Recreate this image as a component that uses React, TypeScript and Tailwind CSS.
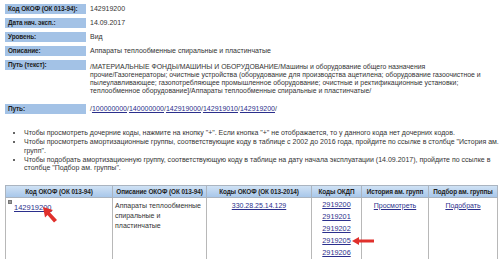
import React from "react";

const links = "text-[#2b2f8c] underline";
const labelCls =
  "w-[81px] h-[10px] shrink-0 bg-[#a3c2e6] pl-[3px] font-bold text-[6.4px] tracking-[-0.1px] leading-[10px] whitespace-nowrap text-[#1c1c1c]";

function InfoRow({ label, children }: { label: string; children: React.ReactNode }) {
  return (
    <div className="flex items-start">
      <div className={labelCls}>{label}</div>
      <div className="pl-[4px] leading-[10px] whitespace-nowrap">{children}</div>
    </div>
  );
}

export default function App() {
  const okdp = ["2919200", "2919201", "2919202", "2919205", "2919206"];
  const heads = [
    "Код ОКОФ (ОК 013-94)",
    "Описание ОКОФ (ОК 013-94)",
    "Коды ОКОФ (ОК 013-2014)",
    "Коды ОКДП",
    "История ам. групп",
    "Подбор ам. группы",
  ];

  return (
    <div className="relative w-[500px] h-[259px] overflow-hidden bg-white text-[7px] text-[#333] font-['Liberation_Sans',Arial,sans-serif]">
      <div className="flex flex-col gap-[4px] pl-[5px] pt-[4px]">
        <InfoRow label="Код ОКОФ (ОК 013-94):">142919200</InfoRow>
        <InfoRow label="Дата нач. эксп.:">14.09.2017</InfoRow>
        <InfoRow label="Уровень:">Вид</InfoRow>
        <InfoRow label="Описание:">Аппараты теплообменные спиральные и пластинчатые</InfoRow>
        <div className="flex items-start">
          <div className={labelCls}>Путь (текст):</div>
          <div className="pl-[4px] pt-[3px] text-[6.9px] leading-[8px] whitespace-nowrap">
            /МАТЕРИАЛЬНЫЕ ФОНДЫ/МАШИНЫ И ОБОРУДОВАНИЕ/Машины и оборудование общего назначения
            <br />
            прочие/Газогенераторы; очистные устройства (оборудование для производства ацетилена; оборудование газоочистное и
            <br />
            пылеулавливающее; газопотребляющее промышленное оборудование; очистные и ректификационные установки;
            <br />
            теплообменное оборудование]/Аппараты теплообменные спиральные и пластинчатые/
          </div>
        </div>
        <div className="mt-[5px]">
          <InfoRow label="Путь:">
            /<span className={links}>100000000</span>/<span className={links}>140000000</span>/
            <span className={links}>142919000</span>/<span className={links}>142919010</span>/
            <span className={links}>142919200</span>/
          </InfoRow>
        </div>
      </div>

      <ul className="mt-[15px] ml-[19px] list-disc pl-[5px] text-[7px] leading-[8.5px] whitespace-nowrap flex flex-col gap-[0.5px]">
        <li>Чтобы просмотреть дочерние коды, нажмите на кнопку "+". Если кнопка "+" не отображается, то у данного кода нет дочерних кодов.</li>
        <li>
          Чтобы просмотреть амортизационные группы, соответствующие коду в таблице с 2002 до 2016 года, пройдите по ссылке в столбце "История ам.
          <br />
          групп".
        </li>
        <li>
          Чтобы подобрать амортизационную группу, соответствующую коду в таблице на дату начала эксплуатации (14.09.2017), пройдите по ссылке в
          <br />
          столбце "Подбор ам. группы".
        </li>
      </ul>

      <table className="mt-[12px] ml-[5px] w-[492px] table-fixed border-collapse text-[7px]">
        <colgroup>
          <col className="w-[107px]" />
          <col className="w-[94px]" />
          <col className="w-[105px]" />
          <col className="w-[50px]" />
          <col className="w-[67px]" />
          <col className="w-[69px]" />
        </colgroup>
        <thead>
          <tr className="h-[12px] bg-gradient-to-b from-[#d3e4f5] to-[#a8c7ea] text-[#1c1c1c]">
            {heads.map((h) => (
              <th
                key={h}
                className="border border-[#aab4c0] px-0 py-0 font-bold text-[6.4px] tracking-[-0.1px] leading-[11px] whitespace-nowrap overflow-hidden"
              >
                {h}
              </th>
            ))}
          </tr>
        </thead>
        <tbody>
          <tr className="align-top">
            <td className="border border-[#b8b8b8] pl-[2px] pt-[2px] h-[66px]">
              <div className="flex items-start gap-[2px]">
                <span className="w-[4px] h-[4px] bg-[#9a9a9a] border border-[#777]"></span>
                <span className={`${links} mt-[2px] text-[7.5px]`}>142919200</span>
              </div>
            </td>
            <td className="border border-[#b8b8b8] pl-[2px] pt-[3px] text-[7px] leading-[10px]">
              Аппараты теплообменные
              <br />
              спиральные и пластинчатые
            </td>
            <td className="border border-[#b8b8b8] pt-[3px] text-center leading-[9px]">
              <span className={links}>330.28.25.14.129</span>
            </td>
            <td className="border border-[#b8b8b8] pt-[2px] text-center">
              <div className="flex flex-col items-center gap-[3px] leading-[9px]">
                {okdp.map((c) => (
                  <span key={c} className={`${links} text-[7.3px]`}>
                    {c}
                  </span>
                ))}
              </div>
            </td>
            <td className="border border-[#b8b8b8] pt-[3px] text-center leading-[9px]">
              <span className={links}>Просмотреть</span>
            </td>
            <td className="border border-[#b8b8b8] pt-[3px] text-center leading-[9px]">
              <span className={links}>Подобрать</span>
            </td>
          </tr>
        </tbody>
      </table>

      {/* red pointer arrows */}
      <svg className="absolute left-[41px] top-[205px]" width="18" height="19" viewBox="0 0 18 19">
        <path d="M2 2 L12 5 L9 7.5 L16 15 L13 17.5 L6.5 10 L4 12.5 Z" fill="#e0302c" />
      </svg>
      <svg className="absolute left-[351px] top-[236px]" width="24" height="10" viewBox="0 0 24 10">
        <path d="M1 5 L8 1 L8 3.5 L23 3.5 L23 6.5 L8 6.5 L8 9 Z" fill="#e0302c" />
      </svg>
    </div>
  );
}
